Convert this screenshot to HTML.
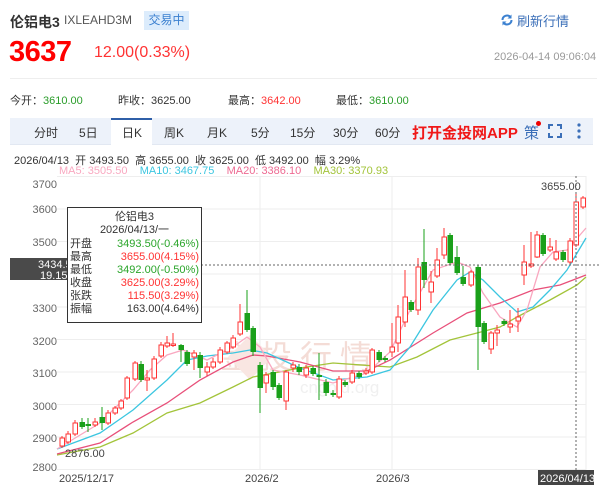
<!DOCTYPE html>
<html><head><meta charset="utf-8"><style>
*{margin:0;padding:0;box-sizing:border-box}
body{width:600px;height:485px;background:#fff;font-family:"Liberation Sans","Noto Sans CJK SC",sans-serif;position:relative;overflow:hidden;color:#333}
.a{position:absolute;white-space:nowrap}
</style></head><body>
<div class="a" style="left:10px;top:12px;font-size:14px;font-weight:bold;color:#333">伦铝电3</div>
<div class="a" style="left:64px;top:13px;font-size:12px;color:#555">IXLEAHD3M</div>
<div class="a" style="left:144px;top:11px;width:45px;height:19px;background:#dcecfc;color:#3b80d0;font-size:12px;line-height:19px;text-align:center">交易中</div>
<svg class="a" style="left:500px;top:13px" width="14" height="14" viewBox="0 0 14 14"><path d="M2.5 7a4.5 4.5 0 0 1 8-2.8" fill="none" stroke="#3b80d0" stroke-width="2"/><path d="M11.5 7a4.5 4.5 0 0 1-8 2.8" fill="none" stroke="#3b80d0" stroke-width="2"/><path d="M11.5 1.5v4h-4z" fill="#3b80d0"/><path d="M2.5 12.5v-4h4z" fill="#3b80d0"/></svg>
<div class="a" style="left:517px;top:11px;font-size:13px;color:#3b6fb8">刷新行情</div>
<div class="a" style="left:9px;top:36px;font-size:29px;font-weight:bold;color:#f00;letter-spacing:-0.5px">3637</div>
<div class="a" style="left:94px;top:44px;font-size:16px;color:#f33">12.00(0.33%)</div>
<div class="a" style="left:494px;top:51px;font-size:11px;color:#999">2026-04-14 09:06:04</div>
<div class="a" style="left:10px;top:78px;width:587px;height:1px;background:#eee"></div>
<div class="a" style="left:10px;top:92px;font-size:11px;color:#333">今开：<span style="color:#2a9d2a">3610.00</span></div>
<div class="a" style="left:118px;top:92px;font-size:11px;color:#333">昨收：3625.00</div>
<div class="a" style="left:228px;top:92px;font-size:11px;color:#333">最高：<span style="color:#f33">3642.00</span></div>
<div class="a" style="left:336px;top:92px;font-size:11px;color:#333">最低：<span style="color:#2a9d2a">3610.00</span></div>
<div class="a" style="left:10px;top:118px;width:583px;height:27px;background:#edf2fa;border-bottom:1px solid #e2e8f2"></div>
<div class="a" style="left:111px;top:118px;width:41px;height:28px;background:#fff;border-top:2px solid #2f5fa8"></div>
<div class="a" style="top:124px;left:0;font-size:12px;color:#333;height:16px;width:600px">
<span class="a" style="left:34px">分时</span><span class="a" style="left:79px">5日</span><span class="a" style="left:122px">日K</span><span class="a" style="left:164px">周K</span><span class="a" style="left:207px">月K</span><span class="a" style="left:251px">5分</span><span class="a" style="left:290px">15分</span><span class="a" style="left:333px">30分</span><span class="a" style="left:375px">60分</span>
<span class="a" style="left:412px;top:-2px;font-size:15px;font-weight:bold;color:#f01818">打开金投网APP</span>
<span class="a" style="left:524px;top:-2px;font-size:15px;color:#3b6fb8">策</span></div>
<div class="a" style="left:536px;top:121px;width:5px;height:5px;border-radius:50%;background:#e00"></div>
<svg class="a" style="left:548px;top:124px" width="14" height="14"><path d="M1 5V1h4M9 1h4v4M13 9v4H9M5 13H1V9" fill="none" stroke="#3b6fb8" stroke-width="2"/></svg>
<svg class="a" style="left:577px;top:123px" width="4" height="16"><circle cx="2" cy="2" r="1.6" fill="#3b6fb8"/><circle cx="2" cy="8" r="1.6" fill="#3b6fb8"/><circle cx="2" cy="14" r="1.6" fill="#3b6fb8"/></svg>
<div class="a" style="left:14px;top:152px;font-size:11px;color:#333">2026/04/13&nbsp; 开 3493.50&nbsp; 高 3655.00&nbsp; 收 3625.00&nbsp; 低 3492.00&nbsp; 幅 3.29%</div>
<div class="a" style="left:59px;top:165px;font-size:11px"><span style="color:#f9a8c0">MA5: 3505.50</span>&nbsp;&nbsp;&nbsp; <span style="color:#3cc6e0">MA10: 3467.75</span>&nbsp;&nbsp;&nbsp; <span style="color:#ee6a92">MA20: 3386.10</span>&nbsp;&nbsp;&nbsp; <span style="color:#a3c43a">MA30: 3370.93</span></div>
<svg id="c" class="a" style="left:0;top:0" width="600" height="485"></svg>
<div class="a" style="left:67px;top:207px;width:135px;height:116px;border:1px solid #333;background:#fff;font-size:11px;line-height:13px">
<div style="text-align:center;margin-top:3px">伦铝电3</div>
<div style="text-align:center;margin-bottom:1px">2026/04/13/一</div>
<div style="display:flex;justify-content:space-between;padding:0 2px"><span>开盘</span><span style="color:#2aa52a">3493.50(-0.46%)</span></div>
<div style="display:flex;justify-content:space-between;padding:0 2px"><span>最高</span><span style="color:#f33">3655.00(4.15%)</span></div>
<div style="display:flex;justify-content:space-between;padding:0 2px"><span>最低</span><span style="color:#2aa52a">3492.00(-0.50%)</span></div>
<div style="display:flex;justify-content:space-between;padding:0 2px"><span>收盘</span><span style="color:#f33">3625.00(3.29%)</span></div>
<div style="display:flex;justify-content:space-between;padding:0 2px"><span>张跌</span><span style="color:#f33">115.50(3.29%)</span></div>
<div style="display:flex;justify-content:space-between;padding:0 2px"><span>振幅</span><span>163.00(4.64%)</span></div>
</div>
<script>
var s='';
var g=[176.5,209,241.5,274,307,339.5,372,404.5,437,469.5];
g.forEach(function(y){s+='<line x1="57" x2="586" y1="'+y+'" y2="'+y+'" stroke="#eee"/>';});
[260,392].forEach(function(x){s+='<line x1="'+x+'" x2="'+x+'" y1="176" y2="470" stroke="#eee"/>';});
s+='<line x1="586" x2="586" y1="176" y2="470" stroke="#eee"/>';
var lab=[[3700,188],[3600,213],[3500,246],[3300,312],[3200,345],[3100,377],[3000,410],[2900,442],[2800,471]];
lab.forEach(function(l){s+='<text x="57" y="'+l[1]+'" font-size="11" fill="#666" text-anchor="end">'+l[0]+'</text>';});
s+='<text x="220" y="368" font-size="32" fill="#f4dcd6" letter-spacing="8" font-family="Noto Sans CJK SC,sans-serif">金投行情</text>';
s+='<text x="300" y="393" font-size="17" fill="#f0f0f0">cngold.org</text>';
s+='<polygon points="250,335 272,357 250,380 228,357" fill="#f9e6e2"/>';
var C=[[62,438,446,'r',436,448],[68,434,442,'r',431,444],[75,423,434,'r',420,436],[82,422,427,'g',418,429],[88,424,426,'g',418,432],[95,422,425,'r',418,427],[102,417,423,'g',407,430],[108,413,423,'r',410,425],[115,408,413,'r',406,415],[121,401,408,'r',399,410],[127,378,398,'r',376,400],[135,363,379,'r',361,381],[141,364,380,'g',361,382],[147,378,380,'r',370,391],[154,359,378,'r',356,380],[161,345,356,'r',342,358],[167,343,346,'r',336,348],[173,344,345,'r',333,347],[181,345,350,'g',344,362],[187,352,364,'g',350,366],[194,353,357,'r',350,370],[200,355,368,'g',352,378],[207,367,372,'r',362,376],[213,362,367,'r',358,369],[220,350,362,'r',347,364],[227,343,352,'r',341,354],[233,338,347,'r',335,349],[240,322,334,'r',304,336],[247,313,330,'g',290,332],[253,328,352,'g',326,356],[260,365,388,'g',362,413],[266,375,383,'r',372,393],[273,372,387,'g',370,390],[279,385,398,'g',383,400],[286,372,401,'r',370,410],[293,365,368,'r',362,372],[299,367,372,'g',364,375],
[306,368,375,'r',365,378],[313,368,374,'g',366,376],[319,375,377,'g',353,400],[326,382,393,'g',379,396],[333,393,395,'g',390,397],[339,379,397,'r',376,399],[345,382,385,'g',380,387],[352,373,382,'r',370,384],[359,373,377,'g',371,379],[366,371,373,'r',368,375],[372,350,372,'r',348,374],[379,352,360,'g',350,362],[385,358,360,'g',356,362],[392,347,352,'r',323,357],[398,317,343,'r',305,352],[405,297,322,'r',270,327],[411,302,310,'g',300,312],[418,267,310,'r',258,315],[424,262,280,'g',229,288],[431,282,292,'r',271,303],[437,260,276,'r',248,278],[444,237,255,'r',228,259],[450,235,263,'g',233,265],[457,257,273,'g',246,275],[463,277,284,'g',266,286],[471,272,285,'r',270,287],[478,267,327,'g',265,370],[484,323,342,'g',321,344],[491,333,349,'r',331,354],[497,330,333,'r',325,346],[504,321,324,'g',319,326],[510,324,327,'r',310,333],[518,317,321,'r',308,332],[524,262,275,'r',245,285],[531,264,266,'r',232,268],[537,235,257,'r',231,258],[543,235,254,'g',233,256],[550,247,250,'r',238,252],[556,252,259,'r',240,261],[563,252,260,'g',250,262],[570,241,262,'r',238,264],[576,202,245,'r',192,247],[583,198,207,'r',196,209]];
function pl(p,c,w){s+='<polyline fill="none" stroke="'+c+'" stroke-width="'+(w||1.3)+'" points="'+p.map(function(a){return a.join(',')}).join(' ')+'"/>';}
pl([[57,455],[100,447],[133,433],[167,413],[200,403],[233,387],[253,377],[300,368],[333,363],[390,367],[417,357],[450,340],[477,333],[500,327],[517,317],[550,300],[577,285],[586,277]],'#a3c43a');
pl([[57,454],[100,443],[133,422],[167,403],[200,380],[233,362],[253,355],[267,356],[300,362],[333,371],[367,371],[390,360],[433,333],[467,313],[500,303],[533,290],[560,285],[586,275]],'#e8507a');
pl([[57,449],[100,433],[133,410],[167,380],[187,360],[207,356],[233,353],[250,350],[267,353],[300,368],[333,380],[367,377],[390,370],[410,347],[433,310],[457,280],[470,272],[483,280],[500,297],[517,312],[533,307],[550,290],[567,270],[586,238]],'#3cc6e0');
pl([[57,449],[100,423],[133,390],[150,370],[167,355],[183,350],[207,360],[233,347],[247,337],[260,347],[273,370],[300,375],[333,383],[367,373],[390,352],[410,310],[433,270],[457,262],[470,267],[483,293],[500,317],[517,327],[527,310],[540,267],[553,252],[567,250],[586,228]],'#f9a8c0');
C.forEach(function(c){var col=c[3]=='r'?'#f33':'#1aa01a';
s+='<line x1="'+c[0]+'" x2="'+c[0]+'" y1="'+c[4]+'" y2="'+c[5]+'" stroke="'+col+'"/>';
var h=Math.max(c[2]-c[1],1.5);
if(c[3]=='r')s+='<rect x="'+(c[0]-2)+'" y="'+c[1]+'" width="4.5" height="'+h+'" fill="#fff" stroke="#f33"/>';
else s+='<rect x="'+(c[0]-2.5)+'" y="'+c[1]+'" width="5.5" height="'+h+'" fill="#1aa01a"/>';});
s+='<line x1="57" x2="600" y1="265" y2="265" stroke="#666" stroke-dasharray="2,2"/>';
s+='<line x1="576" x2="576" y1="176" y2="470" stroke="#666" stroke-dasharray="2,2"/>';
s+='<rect x="10" y="258" width="58" height="22" fill="#4a4a4a"/>';
s+='<text x="38" y="268" font-size="11" fill="#fff">3434.5</text><text x="40" y="279" font-size="11" fill="#fff">19.15</text>';
s+='<text x="541" y="190" font-size="11" fill="#444">3655.00</text>';
s+='<text x="65" y="457" font-size="11" fill="#444">2876.00</text>';
s+='<text x="59" y="482" font-size="11" fill="#444">2025/12/17</text>';
s+='<text x="245" y="482" font-size="11" fill="#444">2026/2</text>';
s+='<text x="376" y="482" font-size="11" fill="#444">2026/3</text>';
s+='<rect x="538" y="470" width="56" height="15" fill="#444"/><text x="540" y="482" font-size="11" fill="#fff">2026/04/13</text>';
document.getElementById('c').innerHTML=s;
</script>
</body></html>
